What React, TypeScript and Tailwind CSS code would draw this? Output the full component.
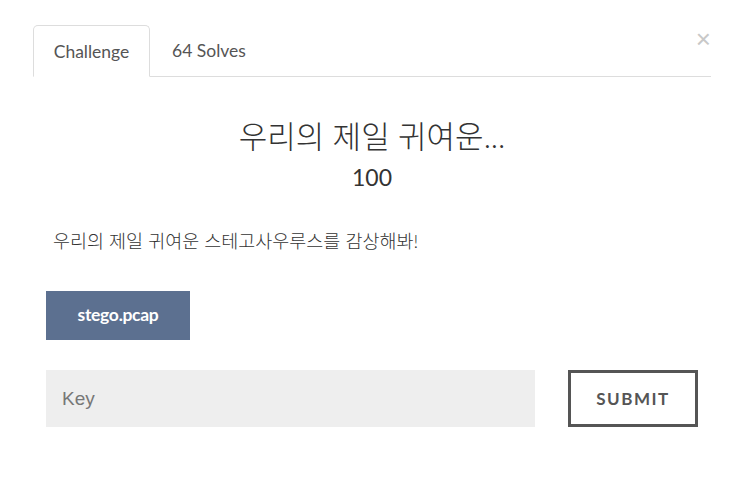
export default function App() {
  return (
    <div className="w-[740px] h-[499px] bg-white font-['Lato','Noto_Sans_CJK_KR',sans-serif] text-[#333] relative">
      <button className="absolute right-[29px] top-[26px] text-[26px] leading-none text-[#c8c8c8] font-['Liberation_Sans',sans-serif]">
        ×
      </button>
      <div className="pt-[25px] pl-[33px] pr-[29px]">
        <div className="flex border-b border-[#ddd] h-[52px]">
          <div className="w-[117px] h-[52px] -mb-px border border-[#ddd] border-b-white bg-white rounded-t-[5px] flex items-center justify-center pt-[2px] text-[17.5px] text-[#555]">
            Challenge
          </div>
          <div className="px-[22px] flex items-center pt-[2px] text-[17.5px] text-[#555]">64 Solves</div>
        </div>
        <div className="flex flex-col items-center mt-[40px]">
          <h2 className="text-[31px] leading-[38px] font-light text-[#333]">우리의 제일 귀여운...</h2>
          <div className="text-[23px] leading-[28px] mt-[8px] text-[#333]">100</div>
        </div>
      </div>
      <div className="pl-[46px] pr-[42px]">
        <p className="pl-[7px] mt-[37px] text-[18.5px] leading-[26px] font-light text-[#333]">
          우리의 제일 귀여운 스테고사우루스를 감상해봐!
        </p>
        <div className="mt-[37px]">
          <div className="w-[144px] h-[49px] bg-[#5c7090] flex items-center justify-center text-white font-bold text-[17.5px] tracking-[-0.3px]">
            stego.pcap
          </div>
        </div>
        <div className="flex mt-[30px] gap-[33px]">
          <input
            placeholder="Key"
            className="w-[489px] h-[57px] bg-[#eeeeee] px-[16px] pt-[1px] text-[19px] font-['Liberation_Sans',sans-serif] placeholder:text-[#777] outline-none"
          />
          <button className="w-[130px] h-[57px] border-[3px] border-[#555] flex items-center justify-center text-[17px] font-bold tracking-[1.5px] text-[#555]">
            SUBMIT
          </button>
        </div>
      </div>
    </div>
  );
}
